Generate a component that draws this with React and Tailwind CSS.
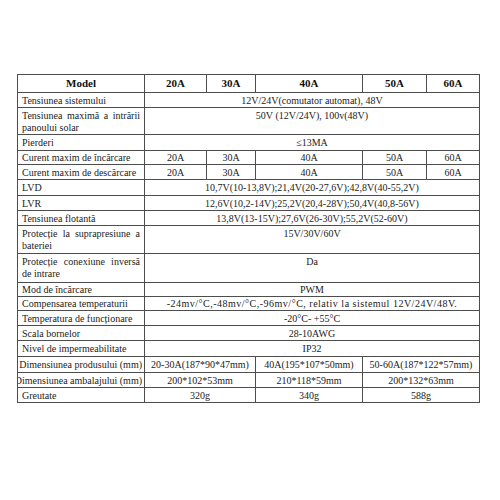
const b = "border border-[#4d4d4d] font-['Liberation_Serif','Times_New_Roman',serif]";

const cols = [127, 62, 49, 107, 64, 53];

function Label({ children, tall, clip }) {
  if (clip) {
    return (
      <td className={`${b} pr-[2px] align-middle`}>
        <div className="flex justify-end overflow-hidden">
          <span className="whitespace-nowrap">{children}</span>
        </div>
      </td>
    );
  }
  return (
    <td
      className={`${b} px-[4px] ${tall ? "align-top pt-[2px] text-justify [text-align-last:left] leading-[12px]" : "align-middle whitespace-nowrap"}`}
    >
      {children}
    </td>
  );
}

function Val({ children, span = 1, top, wide }) {
  return (
    <td
      colSpan={span}
      className={`${b} text-center whitespace-nowrap ${top ? "align-top pt-[2px]" : "align-middle"} ${wide ? "tracking-[0.5px]" : ""}`}
    >
      {children}
    </td>
  );
}

const amps = ["20A", "30A", "40A", "50A", "60A"];

export default function App() {
  return (
    <div className="w-[500px] h-[500px] bg-white pt-[74px] pl-[17px] font-['Liberation_Serif','Times_New_Roman',serif]">
      <table className="table-fixed border-collapse text-[10px] leading-[11px] text-[#222222] w-[462px]">
        <colgroup>
          {cols.map((w, i) => (
            <col key={i} style={{ width: w }} />
          ))}
        </colgroup>
        <tbody>
          <tr className="h-[18px] text-[11px] font-bold text-[#111111]">
            <td className={`${b} text-center align-middle`}>Model</td>
            {amps.map((a) => (
              <td key={a} className={`${b} text-center align-middle`}>
                {a}
              </td>
            ))}
          </tr>
          <tr className="h-[15px]">
            <Label>Tensiunea sistemului</Label>
            <Val span={5}>12V/24V(comutator automat), 48V</Val>
          </tr>
          <tr className="h-[27px]">
            <Label tall>Tensiunea maximă a intrării panoului solar</Label>
            <Val span={5} top>
              50V (12V/24V), 100v(48V)
            </Val>
          </tr>
          <tr className="h-[16px]">
            <Label>Pierderi</Label>
            <Val span={5}>≤13MA</Val>
          </tr>
          <tr className="h-[14px]">
            <Label>Curent maxim de încărcare</Label>
            {amps.map((a) => (
              <Val key={a}>{a}</Val>
            ))}
          </tr>
          <tr className="h-[15px]">
            <Label>Curent maxim de descărcare</Label>
            {amps.map((a) => (
              <Val key={a}>{a}</Val>
            ))}
          </tr>
          <tr className="h-[16px]">
            <Label>LVD</Label>
            <Val span={5}>10,7V(10-13,8V);21,4V(20-27,6V);42,8V(40-55,2V)</Val>
          </tr>
          <tr className="h-[15px]">
            <Label>LVR</Label>
            <Val span={5}>12,6V(10,2-14V);25,2V(20,4-28V);50,4V(40,8-56V)</Val>
          </tr>
          <tr className="h-[15px]">
            <Label>Tensiunea flotantă</Label>
            <Val span={5}>13,8V(13-15V);27,6V(26-30V);55,2V(52-60V)</Val>
          </tr>
          <tr className="h-[28px]">
            <Label tall>Protecție la suprapresiune a bateriei</Label>
            <Val span={5} top>
              15V/30V/60V
            </Val>
          </tr>
          <tr className="h-[29px]">
            <Label tall>Protecție conexiune inversă de intrare</Label>
            <Val span={5} top>
              Da
            </Val>
          </tr>
          <tr className="h-[14px]">
            <Label>Mod de încărcare</Label>
            <Val span={5}>PWM</Val>
          </tr>
          <tr className="h-[14px]">
            <Label>Compensarea temperaturii</Label>
            <Val span={5} wide>
              -24mv/°C,-48mv/°C,-96mv/°C, relativ la sistemul 12V/24V/48V.
            </Val>
          </tr>
          <tr className="h-[15px]">
            <Label>Temperatura de funcționare</Label>
            <Val span={5}>-20°C- +55°C</Val>
          </tr>
          <tr className="h-[15px]">
            <Label>Scala bornelor</Label>
            <Val span={5}>28-10AWG</Val>
          </tr>
          <tr className="h-[16px]">
            <Label>Nivel de impermeabilitate</Label>
            <Val span={5}>IP32</Val>
          </tr>
          <tr className="h-[16px]">
            <Label clip>Dimensiunea produsului (mm)</Label>
            <Val span={2}>20-30A(187*90*47mm)</Val>
            <Val>40A(195*107*50mm)</Val>
            <Val span={2}>50-60A(187*122*57mm)</Val>
          </tr>
          <tr className="h-[15px]">
            <Label clip>Dimensiunea ambalajului (mm)</Label>
            <Val span={2}>200*102*53mm</Val>
            <Val>210*118*59mm</Val>
            <Val span={2}>200*132*63mm</Val>
          </tr>
          <tr className="h-[15px]">
            <Label>Greutate</Label>
            <Val span={2}>320g</Val>
            <Val>340g</Val>
            <Val span={2}>588g</Val>
          </tr>
        </tbody>
      </table>
    </div>
  );
}
